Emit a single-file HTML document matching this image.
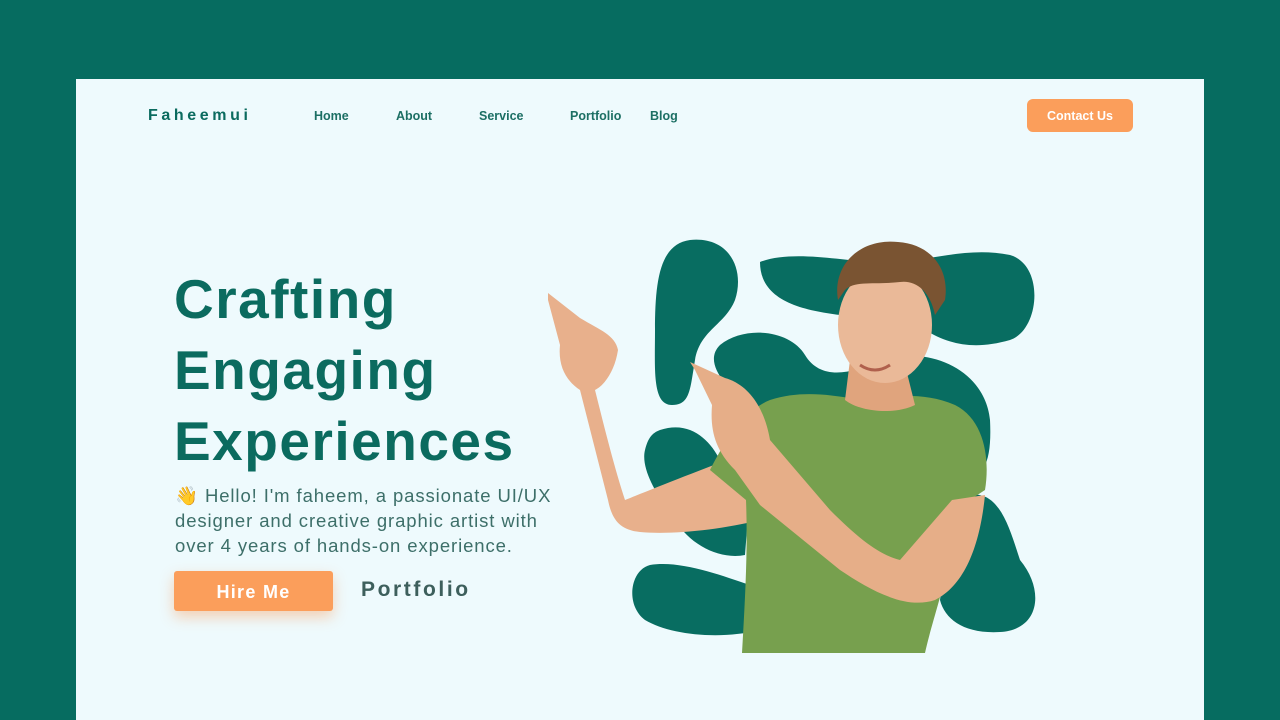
<!DOCTYPE html>
<html><head><meta charset="utf-8"><style>
*{margin:0;padding:0;box-sizing:border-box}
body{width:1280px;height:720px;background:#066c60;position:relative;overflow:hidden;font-family:"Liberation Sans",sans-serif}
.card{position:absolute;left:76px;top:79px;width:1128px;height:641px;background:#eefafd}
.logo{position:absolute;left:148px;top:107px;font-size:16px;font-weight:bold;letter-spacing:3.6px;color:#0b6b5f}
.nav{position:absolute;top:109px;font-size:12.5px;font-weight:bold;color:#1c6f64}
.btn{position:absolute;left:1027px;top:99px;width:106px;height:33px;background:#fb9e5b;border-radius:6px;color:#fff;font-size:12.5px;font-weight:bold;text-align:center;line-height:34px}
h1{position:absolute;left:174px;top:264px;font-size:55px;line-height:71px;color:#0b6b5f;font-weight:bold;letter-spacing:1.5px}
.p{position:absolute;left:175px;top:483px;font-size:18.5px;line-height:25px;color:#3d6f69;width:400px;letter-spacing:0.9px}
.hire{position:absolute;left:174px;top:571px;width:159px;height:40px;background:#fb9e5b;border-radius:3px;color:#fff;font-size:18px;font-weight:bold;text-align:center;line-height:42px;letter-spacing:1.3px;box-shadow:0 6px 14px rgba(251,158,91,.45)}
.port{position:absolute;left:361px;top:578px;font-size:21px;color:#3d5f5c;letter-spacing:2.6px;font-weight:bold}
svg{position:absolute;left:0;top:0}
</style></head><body>
<div class="card"></div>
<div class="logo">Faheemui</div>
<div class="nav" style="left:314px">Home</div>
<div class="nav" style="left:396px">About</div>
<div class="nav" style="left:479px">Service</div>
<div class="nav" style="left:570px">Portfolio</div>
<div class="nav" style="left:650px">Blog</div>
<div class="btn">Contact Us</div>
<h1>Crafting<br>Engaging<br>Experiences</h1>
<div class="p">👋 Hello! I'm faheem, a passionate UI/UX<br>designer and creative graphic artist with<br>over 4 years of hands-on experience.</div>
<div class="hire">Hire Me</div>
<div class="port">Portfolio</div>
<svg width="1280" height="720" viewBox="0 0 1280 720">
<g fill="#086d61">
<path d="M690 240C730 236 745 270 735 300C725 325 700 330 695 360C690 390 690 405 672 405C652 405 655 370 655 330C655 280 660 244 690 240Z"/>
<path d="M760 262C790 250 840 260 870 262C920 266 960 245 1010 255C1045 265 1040 330 1010 340C975 350 950 345 925 330C895 315 870 320 840 315C800 310 760 300 760 262Z"/>
<path d="M720 345C745 325 790 330 805 355C820 380 850 375 880 360C930 345 985 370 990 420C992 460 985 480 960 480L850 470C800 460 760 430 740 400C720 380 705 360 720 345Z"/>
<path d="M660 430C690 420 710 440 720 460L750 490L745 555C720 560 690 545 675 520C660 500 640 470 645 450C648 438 652 433 660 430Z"/>
<path d="M650 565C680 560 720 575 750 585L760 630C720 640 670 635 645 620C625 605 630 570 650 565Z"/>
<path d="M970 495C1000 490 1010 530 1020 560C1045 590 1040 630 1000 632C965 634 945 620 940 600L950 520C955 505 960 497 970 495Z"/>
</g>
<path d="M548 293L580 318C600 330 615 335 618 350C615 370 605 385 595 390C605 430 615 470 625 500C650 490 700 470 740 455L760 520C720 530 670 535 640 532C620 530 612 520 608 500L580 390C565 380 558 365 560 345L548 300Z" fill="#e8b08c"/>
<path d="M770 400C800 390 830 395 850 398C890 398 920 390 955 405C985 420 990 460 985 490L962 505L950 560C940 600 930 630 925 653L742 653C745 600 748 550 746 500L710 470C725 440 745 410 770 400Z" fill="#77a04e"/>
<path d="M690 362L725 378C750 385 765 410 770 440L830 510C860 540 880 555 900 560L952 500L985 495C980 545 965 585 935 600C905 610 870 590 840 570L760 505L735 470C715 450 710 430 712 405L695 370Z" fill="#e6ae88"/>
<path d="M850 360L905 365L915 405C895 415 860 412 845 400Z" fill="#e0a47d"/>
<ellipse cx="885" cy="325" rx="47" ry="58" fill="#eab998"/>
<path d="M838 300C832 265 860 238 898 242C930 244 950 268 945 300L935 315C930 290 915 280 900 282C875 285 855 280 845 290Z" fill="#7a5432"/>
<path d="M860 365Q875 375 890 365" stroke="#b0604c" stroke-width="3" fill="none"/>
</svg>
</body></html>
